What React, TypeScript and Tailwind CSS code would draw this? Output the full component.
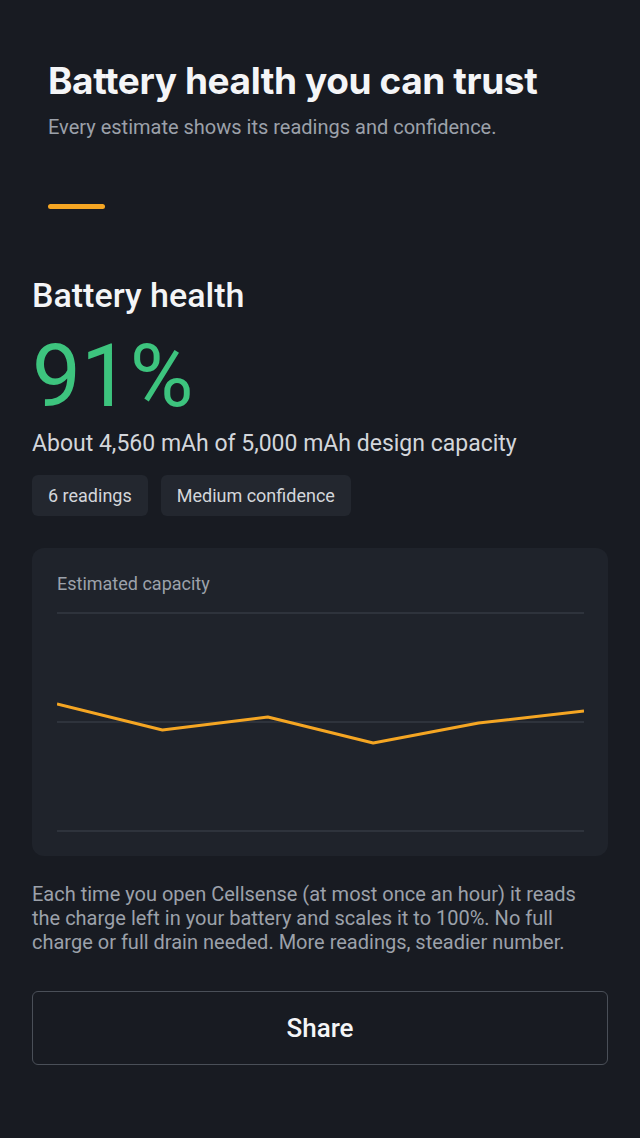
import React from "react";

const pts: [number, number][] = [
  [0, 92],
  [105.4, 118],
  [210.8, 105],
  [316.2, 131],
  [421.6, 111],
  [527, 99],
];

export default function App() {
  return (
    <div className="min-h-[1138px] w-full bg-[#181b22] font-['Roboto',sans-serif]">
      <div className="px-12 pt-[58px]">
        <h1 className="font-['Inter',sans-serif] text-[37px] font-bold leading-[46px] tracking-[-0.4px] text-[#f4f5f7]">
          Battery health you can trust
        </h1>
        <p className="mt-[9px] text-[20px] leading-[28px] text-[#9ca1aa]">
          Every estimate shows its readings and confidence.
        </p>
        <div className="mt-[63px] h-[5px] w-[57px] rounded-full bg-[#f5a623]" />
      </div>
      <div className="px-8 pt-[66px]">
        <h2 className="text-[34px] font-medium leading-[40px] text-[#f4f5f7]">Battery health</h2>
        <div className="mt-[21px] text-[87px] leading-[80px] text-[#3dc47e]">91%</div>
        <p className="mt-[13px] text-[23px] leading-[30px] text-[#d3d6db]">
          About 4,560 mAh of 5,000 mAh design capacity
        </p>
        <div className="mt-[16px] flex gap-[13px]">
          <span className="flex h-[41px] items-center rounded-[6px] bg-[#23272f] px-[16px] text-[18px] text-[#d3d6db]">
            6 readings
          </span>
          <span className="flex h-[41px] items-center rounded-[6px] bg-[#23272f] px-[16px] text-[18px] text-[#d3d6db]">
            Medium confidence
          </span>
        </div>
        <div className="mt-[32px] h-[308px] rounded-[12px] bg-[#1f232b] px-[25px] pt-[24px]">
          <div className="text-[18px] leading-[24px] text-[#9ca1aa]">Estimated capacity</div>
          <svg className="mt-[16px] block" width="527" height="222" viewBox="0 0 527 222">
            <line x1="0" y1="1" x2="527" y2="1" stroke="#2e333c" strokeWidth="2" />
            <line x1="0" y1="110" x2="527" y2="110" stroke="#2e333c" strokeWidth="2" />
            <line x1="0" y1="219" x2="527" y2="219" stroke="#2e333c" strokeWidth="2" />
            <polyline
              points={pts.map((p) => p.join(",")).join(" ")}
              fill="none"
              stroke="#f5a623"
              strokeWidth="3"
              strokeLinejoin="round"
            />
          </svg>
        </div>
        <p className="mt-[26px] text-[20px] leading-[24px] text-[#9ca1aa]">
          Each time you open Cellsense (at most once an hour) it reads the charge left in your battery and scales it
          to 100%. No full charge or full drain needed. More readings, steadier number.
        </p>
        <button className="mt-[37px] flex h-[74px] w-full items-center justify-center rounded-[6px] border border-[#4a4f58] text-[26px] font-medium text-[#f4f5f7]">
          Share
        </button>
      </div>
    </div>
  );
}
